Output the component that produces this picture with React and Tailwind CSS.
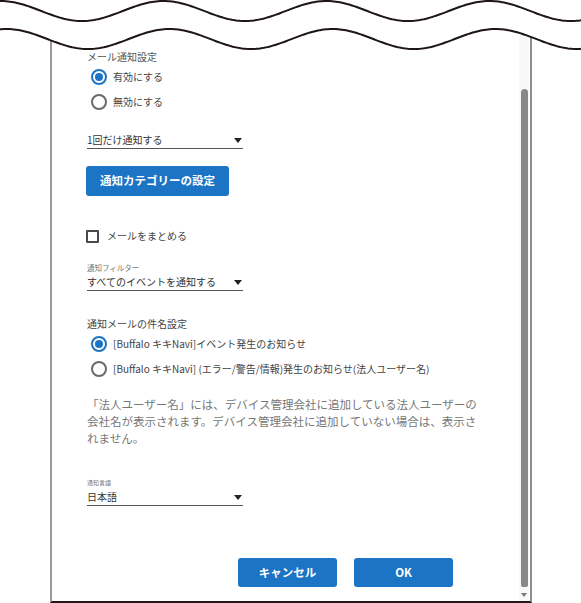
import React from "react";

const P = 163;
function wavePoints(base, amp, trough) {
  const pts = [];
  for (let x = -6; x <= 592; x += 2) {
    const y = base + amp * Math.cos((2 * Math.PI * (x - trough)) / P);
    pts.push([x, y]);
  }
  return pts;
}
function toPath(pts) {
  return pts.map((p, i) => (i === 0 ? "M" : "L") + p[0] + " " + p[1].toFixed(2)).join(" ");
}

function Waves() {
  const top = wavePoints(11, 10, 82);
  const second = wavePoints(39, 10, 88);
  const fill = toPath(second) + " L592 -6 L-6 -6 Z";
  return (
    <svg className="absolute left-0 top-0" width="581" height="60" viewBox="0 0 581 60">
      <path d={fill} fill="#ffffff" />
      <path d={toPath(top)} fill="none" stroke="#1e1614" strokeWidth="2" />
      <path d={toPath(second)} fill="none" stroke="#1e1614" strokeWidth="2" />
    </svg>
  );
}

function Radio({ checked, label }) {
  return (
    <div className="flex h-[25px] items-center pl-[4px]">
      <span
        className={
          checked
            ? "flex h-[16px] w-[16px] items-center justify-center rounded-full border-2 border-[#1b74c4]"
            : "flex h-[16px] w-[16px] items-center justify-center rounded-full border-2 border-[#6a6a6a]"
        }
      >
        {checked ? <span className="h-[8px] w-[8px] rounded-full bg-[#1b74c4]" /> : null}
      </span>
      <span className="ml-[6px] text-[10px] leading-[14px] text-[#444]">{label}</span>
    </div>
  );
}

function Arrow() {
  return (
    <svg width="8" height="5" viewBox="0 0 8 5" className="mr-[1px]">
      <path d="M0 0 L8 0 L4 5 Z" fill="#222" />
    </svg>
  );
}

function Select({ value }) {
  return (
    <div className="flex w-[156px] items-center justify-between border-b border-[#555]">
      <span className="text-[10px] leading-[16px] text-[#333]">{value}</span>
      <Arrow />
    </div>
  );
}

export default function App() {
  return (
    <div className="relative h-[603px] w-[581px] overflow-hidden bg-white font-['Noto_Sans_CJK_JP',sans-serif]">
      <div className="ml-[50px] mt-[30px] flex h-[573px] w-[482px] border-b-2 border-l-2 border-r-2 border-b-[#231815] border-l-[#9a9a9a] border-r-[#8e8e8e]">
        <div className="flex flex-1 flex-col pl-[35px] pt-[19px]">
          <div className="h-[15px] text-[10px] leading-[15px] text-[#555]">メール通知設定</div>
          <Radio checked label="有効にする" />
          <Radio label="無効にする" />

          <div className="mt-[18px]">
            <Select value="1回だけ通知する" />
          </div>

          <button className="ml-[-1px] mt-[17px] flex h-[30px] w-[143px] items-center justify-center rounded-[3px] bg-[#1b74c4] text-[11.5px] font-bold text-white">
            通知カテゴリーの設定
          </button>

          <div className="ml-[-1px] mt-[33px] flex h-[14px] items-center">
            <span className="h-[13px] w-[13px] rounded-[1px] border-2 border-[#4a4a4a]" />
            <span className="ml-[8px] text-[10px] leading-[14px] text-[#444]">メールをまとめる</span>
          </div>

          <div className="mt-[20px] h-[10px] text-[7.5px] leading-[10px] text-[#777]">通知フィルター</div>
          <div className="mt-[1px]">
            <Select value="すべてのイベントを通知する" />
          </div>

          <div className="mt-[25px] h-[15px] text-[10px] leading-[15px] text-[#444]">通知メールの件名設定</div>
          <Radio checked label="[Buffalo キキNavi]イベント発生のお知らせ" />
          <Radio label="[Buffalo キキNavi] (エラー/警告/情報)発生のお知らせ(法人ユーザー名)" />

          <p className="mt-[15px] w-[430px] text-[11.5px] leading-[17px] text-[#777]">
            「法人ユーザー名」には、デバイス管理会社に追加している法人ユーザーの
            <br />
            会社名が表示されます。デバイス管理会社に追加していない場合は、表示さ
            <br />
            れません。
          </p>

          <div className="mt-[31px] h-[10px] text-[6px] leading-[10px] text-[#777]">通知言語</div>
          <div className="mt-[1px]">
            <Select value="日本語" />
          </div>

          <div className="ml-[151px] mt-[52px] flex gap-[17px]">
            <button className="flex h-[29px] w-[99px] items-center justify-center rounded-[3px] bg-[#1b74c4] text-[11.5px] font-bold text-white">
              キャンセル
            </button>
            <button className="flex h-[29px] w-[99px] items-center justify-center rounded-[3px] bg-[#1b74c4] text-[11.5px] font-bold text-white">
              OK
            </button>
          </div>
        </div>

        <div className="mr-[1px] flex w-[10px] flex-col items-center bg-[#f8f8f8]">
          <div className="mt-[59px] h-[498px] w-[7px] rounded-t-[4px] rounded-b-[3px] bg-[#898989]" />
          <svg width="6" height="4" viewBox="0 0 6 4" className="mt-[6px]">
            <path d="M0 0 L6 0 L3 4 Z" fill="#7a7a7a" />
          </svg>
        </div>
      </div>
      <Waves />
    </div>
  );
}
